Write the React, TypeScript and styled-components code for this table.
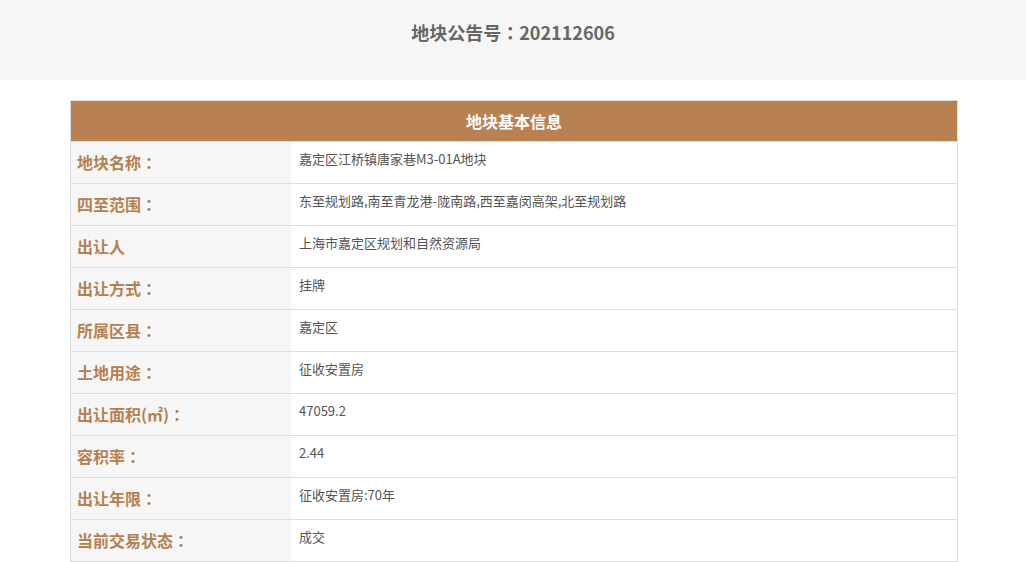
import React from "react";
import styled, { createGlobalStyle } from "styled-components";

const Global = createGlobalStyle`
  html, body { margin: 0; padding: 0; background: #fff; }
  body { font-family: "Noto Sans CJK SC", "Noto Sans", sans-serif; }
`;

const TopBand = styled.div`
  height: 80px;
  background: #f6f6f6;
  display: flex;
  align-items: center;
  justify-content: center;
  padding-bottom: 16px;
  box-sizing: border-box;
`;

const Title = styled.h1`
  margin: 0;
  font-size: 18px;
  font-weight: bold;
  color: #666;
  line-height: 24px;
`;

const Colon = styled.span`
  font-family: "Noto Sans CJK TC", "Noto Sans CJK SC", sans-serif;
`;

const Table = styled.div`
  margin: 20px 0 0 70px;
  width: 888px;
  border: 1px solid #dedede;
  box-sizing: border-box;
`;

const Head = styled.div`
  height: 40px;
  background: #b98152;
  color: #fff;
  font-size: 16px;
  font-weight: bold;
  display: flex;
  align-items: center;
  justify-content: center;
`;

const Row = styled.div`
  display: grid;
  grid-template-columns: 220px 1fr;
  height: 42px;
  border-top: 1px solid #dedede;
  box-sizing: border-box;
`;

const Label = styled.div`
  background: #f6f6f6;
  color: #b5804f;
  font-size: 16px;
  font-weight: bold;
  display: flex;
  align-items: center;
  padding-left: 6px;
  padding-bottom: 2px;
`;

const Value = styled.div`
  color: #555;
  font-size: 13px;
  line-height: 16px;
  padding: 9px 8px 0;
`;

const rows: [string, string][] = [
  ["地块名称", "嘉定区江桥镇唐家巷M3-01A地块"],
  ["四至范围", "东至规划路,南至青龙港-陇南路,西至嘉闵高架,北至规划路"],
  ["出让人|", "上海市嘉定区规划和自然资源局"],
  ["出让方式", "挂牌"],
  ["所属区县", "嘉定区"],
  ["土地用途", "征收安置房"],
  ["出让面积(㎡)", "47059.2"],
  ["容积率", "2.44"],
  ["出让年限", "征收安置房:70年"],
  ["当前交易状态", "成交"],
];

export default function App() {
  return (
    <>
      <Global />
      <TopBand>
        <Title>
          地块公告号<Colon>：</Colon>202112606
        </Title>
      </TopBand>
      <Table>
        <Head>地块基本信息</Head>
        {rows.map(([k, v]) => {
          const plain = k.endsWith("|");
          return (
            <Row key={k}>
              <Label>
                {plain ? k.slice(0, -1) : k}
                {!plain && <Colon>：</Colon>}
              </Label>
              <Value>{v}</Value>
            </Row>
          );
        })}
      </Table>
    </>
  );
}
